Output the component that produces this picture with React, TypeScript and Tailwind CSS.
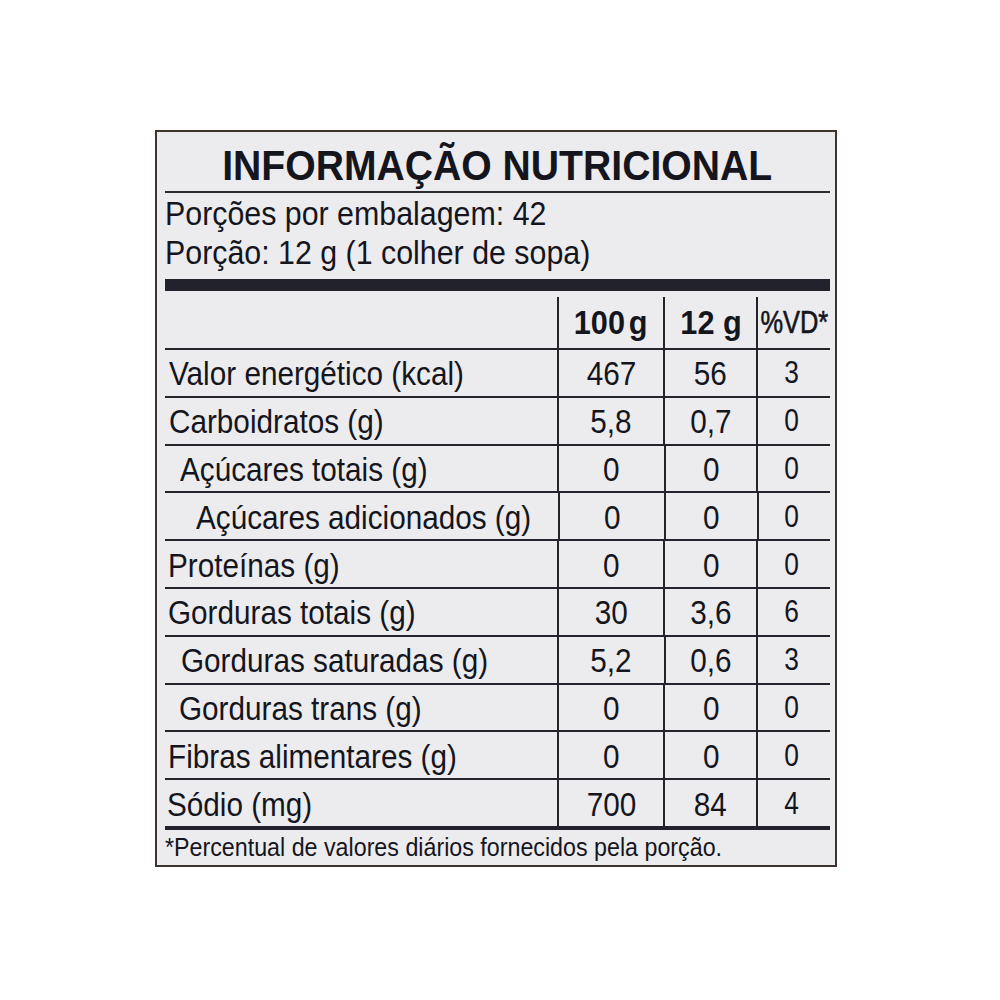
import React from "react";

type Row = { label: string; indent: string; v: [string, string, string] };

const rows: Row[] = [
  { label: "Valor energético (kcal)", indent: "pl-[4px]", v: ["467", "56", "3"] },
  { label: "Carboidratos (g)", indent: "pl-[4px]", v: ["5,8", "0,7", "0"] },
  { label: "Açúcares totais (g)", indent: "pl-[15px]", v: ["0", "0", "0"] },
  { label: "Açúcares adicionados (g)", indent: "pl-[31px]", v: ["0", "0", "0"] },
  { label: "Proteínas (g)", indent: "pl-[3px]", v: ["0", "0", "0"] },
  { label: "Gorduras totais (g)", indent: "pl-[3px]", v: ["30", "3,6", "6"] },
  { label: "Gorduras saturadas (g)", indent: "pl-[16px]", v: ["5,2", "0,6", "3"] },
  { label: "Gorduras trans (g)", indent: "pl-[14px]", v: ["0", "0", "0"] },
  { label: "Fibras alimentares (g)", indent: "pl-[3px]", v: ["0", "0", "0"] },
  { label: "Sódio (mg)", indent: "pl-[2px]", v: ["700", "84", "4"] },
];

function Cell({ children, w, bold = false }: { children: React.ReactNode; w: string; bold?: boolean }) {
  return (
    <div className={`${w} h-full border-l-2 border-[#23232c] flex items-center justify-center`}>
      <span
        className={`inline-block origin-center text-[33px] leading-none whitespace-nowrap ${
          bold ? "font-bold scale-x-[0.93]" : "scale-x-[0.9]"
        }`}
      >
        {children}
      </span>
    </div>
  );
}

export default function App() {
  return (
    <div
      className="w-[1000px] h-[1000px] bg-white pt-[130px] pl-[155px]"
      style={{ fontFamily: "'Liberation Sans', Arial, sans-serif" }}
    >
      <div className="w-[682px] h-[737px] border-2 border-[#3d342d] bg-[#ececee] pl-[8px] pr-[5px] flex flex-col text-[#15151d]">
        {/* Title */}
        <div className="h-[61px] pt-[8px] flex items-center justify-center border-b-2 border-[#2a2a33]">
          <span className="inline-block scale-x-[0.91] origin-center text-[43px] font-bold leading-none whitespace-nowrap">
            INFORMAÇÃO NUTRICIONAL
          </span>
        </div>

        {/* Portions */}
        <div className="pt-[1px] pb-[7px] flex flex-col">
          <div className="h-[39px] flex items-center">
            <span className="inline-block scale-x-[0.92] origin-left text-[33px] leading-none whitespace-nowrap">
              Porções por embalagem: 42
            </span>
          </div>
          <div className="h-[39px] flex items-center">
            <span className="inline-block scale-x-[0.92] origin-left text-[33px] leading-none whitespace-nowrap">
              Porção: 12 g (1 colher de sopa)
            </span>
          </div>
        </div>

        {/* Thick bar */}
        <div className="h-[12px] bg-[#22222c]" />

        {/* Header row */}
        <div className="h-[57px] pt-[6px] flex">
          <div className="w-[393px] h-full" />
          <Cell w="w-[107px]" bold>
            100<span className="ml-[4px]">g</span>
          </Cell>
          <Cell w="w-[93px]" bold>
            12 g
          </Cell>
          <div className="w-[74px] h-full border-l-2 border-[#23232c] flex items-center justify-center">
            <span className="inline-block scale-x-[0.82] origin-center text-[31px] leading-none whitespace-nowrap [-webkit-text-stroke:0.6px_#15151d]">
              %VD*
            </span>
          </div>
        </div>

        {/* Data rows */}
        {rows.map((r) => (
          <div key={r.label} className="h-[47.8px] border-t-2 border-[#23232c] flex">
            <div className={`w-[393px] h-full flex items-center pt-[2px] ${r.indent}`}>
              <span className="inline-block scale-x-[0.9] origin-left text-[33px] leading-none whitespace-nowrap">
                {r.label}
              </span>
            </div>
            <div className="w-[107px] h-full border-l-2 border-[#23232c] flex items-center justify-center pt-[2px]">
              <span className="inline-block scale-x-[0.9] origin-center text-[33px] leading-none whitespace-nowrap">
                {r.v[0]}
              </span>
            </div>
            <div className="w-[93px] h-full border-l-2 border-[#23232c] flex items-center justify-center pt-[2px]">
              <span className="inline-block scale-x-[0.9] origin-center text-[33px] leading-none whitespace-nowrap">
                {r.v[1]}
              </span>
            </div>
            <div className="w-[74px] h-full border-l-2 border-[#23232c] flex items-center justify-center pr-[5px]">
              <span className="inline-block scale-x-[0.85] origin-center text-[31px] leading-none whitespace-nowrap">
                {r.v[2]}
              </span>
            </div>
          </div>
        ))}

        {/* Bottom thick line */}
        <div className="h-[4px] bg-[#22222c]" />

        {/* Footer */}
        <div className="flex-1 flex items-center">
          <span className="inline-block scale-x-[0.93] origin-left text-[25px] leading-none whitespace-nowrap">
            *Percentual de valores diários fornecidos pela porção.
          </span>
        </div>
      </div>
    </div>
  );
}
